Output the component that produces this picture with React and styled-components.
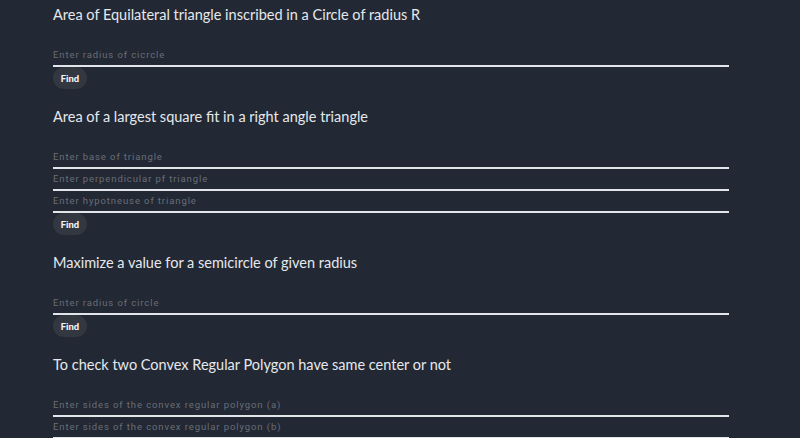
import React from "react";
import styled, { createGlobalStyle } from "styled-components";

const GlobalStyle = createGlobalStyle`
  html, body {
    margin: 0;
    padding: 0;
    background: #222834;
  }
  body {
    font-family: "Lato", "Roboto", sans-serif;
    overflow: hidden;
  }
`;

const Page = styled.div`
  padding: 5px 0 0 53px;
  width: 676px;
`;

const Section = styled.section`
  display: flex;
  flex-direction: column;
  align-items: flex-start;
  margin-bottom: 18px;
`;

const Heading = styled.h3`
  margin: 0 0 20px 0;
  font-family: "Lato", sans-serif;
  font-size: 14.5px;
  line-height: 20px;
  font-weight: 400;
  color: #e6e8ec;
`;

const Input = styled.input`
  box-sizing: border-box;
  width: 100%;
  height: 22px;
  padding: 0 0 1px 0;
  margin: 0;
  background: transparent;
  border: none;
  border-bottom: 2px solid #e2e5ea;
  outline: none;
  font-family: "Roboto", sans-serif;
  font-size: 9.5px;
  letter-spacing: 0.9px;
  color: #e6e8ec;

  &::placeholder {
    color: #6a6e76;
  }
`;

const Button = styled.button`
  height: 22px;
  width: 34px;
  padding: 0;
  border: none;
  border-radius: 11px;
  background: #33373f;
  color: #f2f3f5;
  font-family: "Roboto", sans-serif;
  font-size: 9.5px;
  font-weight: 700;
  cursor: pointer;
`;

const sections = [
  {
    title: "Area of Equilateral triangle inscribed in a Circle of radius R",
    inputs: ["Enter radius of cicrcle"],
  },
  {
    title: "Area of a largest square fit in a right angle triangle",
    inputs: [
      "Enter base of triangle",
      "Enter perpendicular pf triangle",
      "Enter hypotneuse of triangle",
    ],
  },
  {
    title: "Maximize a value for a semicircle of given radius",
    inputs: ["Enter radius of circle"],
  },
  {
    title: "To check two Convex Regular Polygon have same center or not",
    inputs: [
      "Enter sides of the convex regular polygon (a)",
      "Enter sides of the convex regular polygon (b)",
    ],
  },
];

const App = () => {
  return (
    <Page>
      <GlobalStyle />
      {sections.map((section, index) => (
        <Section key={index}>
          <Heading>{section.title}</Heading>
          {section.inputs.map((placeholder) => (
            <Input key={placeholder} placeholder={placeholder} />
          ))}
          <Button>Find</Button>
        </Section>
      ))}
    </Page>
  );
};

export default App;
